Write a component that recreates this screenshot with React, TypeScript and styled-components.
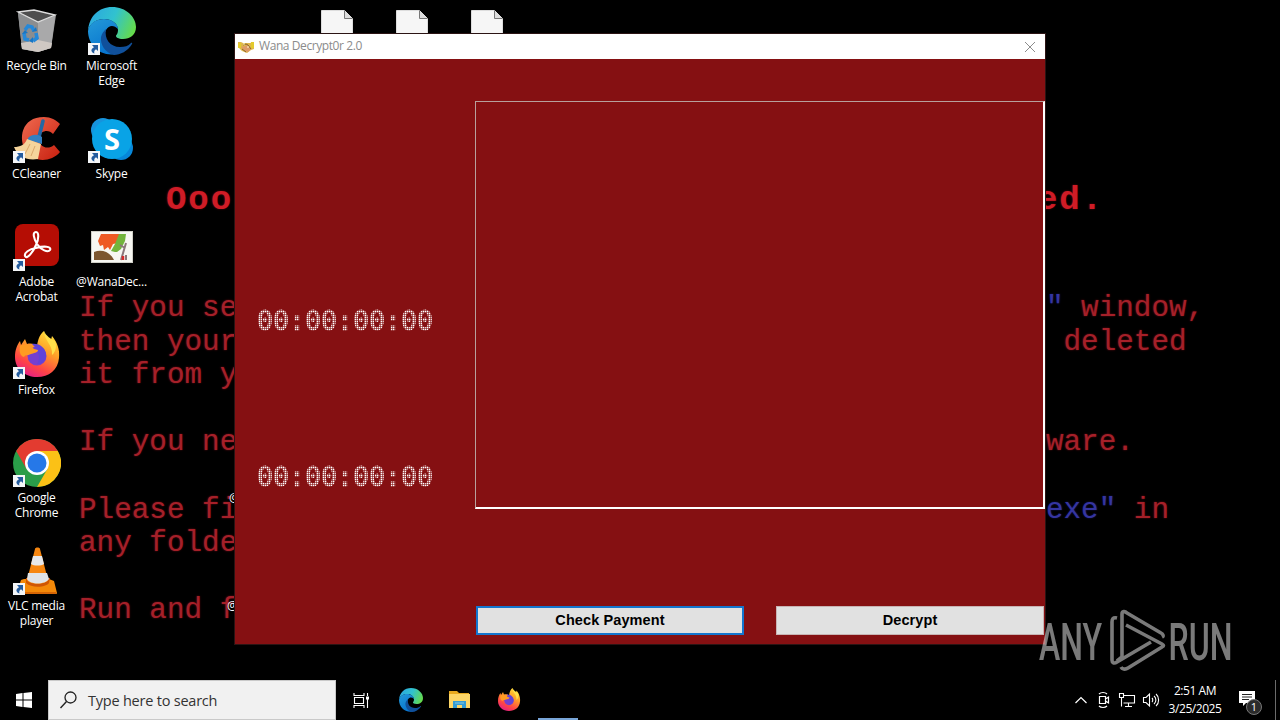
import React from "react";
import styled, { createGlobalStyle } from "styled-components";

const Global = createGlobalStyle`
  * { box-sizing: border-box; }
  html, body { margin: 0; background: #000; overflow: hidden; }
  svg { display: block; flex: none; }
`;

const Screen = styled.main`
  position: relative;
  display: flex;
  flex-direction: column;
  width: 1280px;
  height: 720px;
  overflow: hidden;
  background: #000;
  font-family: "Open Sans", "Noto Sans", sans-serif;
`;

const Desktop = styled.section`
  position: relative;
  height: 680px;
`;

const Wallpaper = styled.div`
  position: absolute;
  inset: 0;
  padding: 179px 0 0 79px;
  font-family: "Liberation Mono", monospace;
  color: #a52029;
`;

const Headline = styled.div`
  display: flex;
  justify-content: space-between;
  width: 938px;
  margin: 0 0 71px 87px;
  font-size: 34px;
  letter-spacing: 1.950px;
  line-height: 42px;
  font-weight: 700;
  color: #cf1c26;
  text-shadow: 0 0 2px #6b0a10;
`;

const Line = styled.div<{ $chars?: number }>`
  display: flex;
  justify-content: space-between;
  width: ${(p) => (p.$chars ? p.$chars + "ch" : "auto")};
  height: 33.6px;
  font-size: 29.3px;
  line-height: 33.6px;
  white-space: pre;
  text-shadow: 0 0 2px #700c14;
`;

const Blue = styled.span`
  color: #3535a0;
  text-shadow: 0 0 2px #15155e;
`;

const IconGrid = styled.div`
  position: relative;
  display: grid;
  grid-template-columns: repeat(7, 75px);
  grid-template-rows: repeat(6, 108px);
  height: 648px;
  margin-left: -1px;
`;

const Shortcut = styled.div<{ $col: number; $row: number }>`
  grid-column: ${(p) => p.$col};
  grid-row: ${(p) => p.$row};
  display: flex;
  flex-direction: column;
  align-items: center;
  padding: 7px 0 0 0;
`;

const IconBox = styled.div`
  position: relative;
  width: 48px;
  height: 48px;
`;

const ArrowBadge = styled.div`
  position: absolute;
  left: 0;
  bottom: 0;
  width: 12px;
  height: 12px;
`;

const Label = styled.div<{ $edge?: number }>`
  width: 75px;
  margin-top: 3px;
  padding-left: ${(p) => p.$edge ?? 0}px;
  text-align: ${(p) => (p.$edge === undefined ? "center" : "left")};
  font-size: 12px;
  line-height: 15px;
  letter-spacing: -0.22px;
  color: #fff;
  white-space: pre-line;
  text-shadow: 0 1px 1px #000;
`;

const Window = styled.article`
  position: absolute;
  left: 235px;
  top: 34px;
  width: 810px;
  height: 610px;
  display: flex;
  flex-direction: column;
  background: #851012;
  box-shadow: 0 0 0 1px #2b1414;
`;

const TitleBar = styled.header`
  display: flex;
  align-items: center;
  height: 25px;
  padding: 0 9px 0 3px;
  background: #fff;
`;

const Title = styled.span`
  flex: 1;
  margin: -1px 0 0 4px;
  font-size: 12px;
  line-height: 16px;
  letter-spacing: -0.42px;
  color: #8b8b8b;
`;

const Body = styled.div`
  display: flex;
  flex: 1;
`;

const Timers = styled.div`
  width: 240px;
  padding: 246px 0 0 22px;
`;

const Countdown = styled.div`
  height: 32px;
  margin-bottom: 124px;
  font-family: "DejaVu Sans Mono", monospace;
  font-size: 26.58px;
  line-height: 32px;
  color: #fff;
  -webkit-text-stroke: 1px #fff;
  mask-image:
    linear-gradient(90deg, #000 1px, rgba(0, 0, 0, 0.42) 1px),
    linear-gradient(#000 1px, rgba(0, 0, 0, 0.42) 1px);
  mask-size: 2px 2px;
  mask-composite: intersect;
`;

const Main = styled.div`
  width: 570px;
  padding-top: 42px;
`;

const MessagePane = styled.div`
  height: 408px;
  border: 1px solid #b8a09c;
  border-right: 2px solid #fff;
  border-bottom: 2px solid #fff;
`;

const Actions = styled.div`
  display: flex;
  gap: 32px;
  padding: 97px 1px 0;
`;

const Button = styled.button<{ $focused?: boolean }>`
  width: 268px;
  height: 29px;
  padding: 0 0 1px;
  border: ${(p) => (p.$focused ? "2px solid #1376cf" : "1px solid #c8b4b4")};
  background: #e1e1e1;
  font-family: "Liberation Sans", sans-serif;
  font-size: 14.5px;
  font-weight: 700;
  letter-spacing: 0.1px;
  color: #000;
`;

const Watermark = styled.div`
  position: absolute;
  left: 1038px;
  top: 608px;
  display: flex;
  opacity: 0.48;
`;

const Taskbar = styled.footer`
  display: flex;
  height: 40px;
  background: #000;
`;

const Start = styled.div`
  display: grid;
  place-items: center;
  width: 48px;
`;

const Search = styled.div`
  display: flex;
  align-items: center;
  gap: 11px;
  width: 288px;
  padding-left: 11px;
  border: 1px solid #c9c9c9;
  background: #f1f1f1;
  font-size: 14.5px;
  letter-spacing: -0.22px;
  color: #333;
`;

const TaskButton = styled.div<{ $active?: boolean }>`
  display: grid;
  place-items: center;
  width: ${(p) => (p.$active ? 40 : 49)}px;
  margin-left: ${(p) => (p.$active ? 5 : 0)}px;
  border-bottom: ${(p) => (p.$active ? "2px solid #78a5d8" : "0")};
`;

const TaskList = styled.div`
  display: flex;
  margin-left: 1px;
`;

const Tray = styled.div`
  display: flex;
  align-items: center;
  gap: 6px;
  margin-left: auto;
`;

const Clock = styled.div`
  width: 66px;
  margin-left: -4px;
  text-align: center;
  font-size: 12px;
  line-height: 18px;
  letter-spacing: -0.45px;
  color: #fff;
`;

const Notice = styled.div`
  position: relative;
  width: 26px;
  height: 20px;
  margin-left: 4px;
`;

const Count = styled.span`
  position: absolute;
  left: 8px;
  top: 9px;
  width: 16px;
  height: 16px;
  border: 1px solid #777;
  border-radius: 50%;
  background: #2b2b2b;
  font-size: 11px;
  line-height: 14px;
  text-align: center;
  color: #fff;
`;

const PeekEdge = styled.div`
  width: 5px;
  height: 40px;
  margin-left: 5px;
  border-left: 1px solid #6b6b6b;
`;

const Arrow = () => (
  <ArrowBadge>
    <svg width="12" height="12" viewBox="0 0 12 12">
      <rect width="12" height="12" fill="#f4f6f8" />
      <path d="M4 2h6v6L8 6.2C6 7.500 6 9 6.500 10.500 2.500 9 2.500 6 6 4.200Z" fill="#245c9e" />
    </svg>
  </ArrowBadge>
);

const RecycleBin = () => (
  <svg width="48" height="48" viewBox="0 0 48 48">
    <path d="M5 5 43 8 38 41 25 45 9 42Z" fill="#9b9b9b" />
    <path d="M5 6 25 15 25 45 9 42Z" fill="#8b8d8f" />
    <path d="M25 15 42 9 38 41 25 45Z" fill="#a9a9aa" />
    <path d="m8 36 17-3v12L9 42Zm17-3 14 3-1 5-13 4Z" fill="#cfc8c3" />
    <path d="M5 5 21 3 42 8 25 15Z" fill="#4e4e4e" stroke="#dedede" strokeWidth="1.300" />
    <g fill="none" stroke="#2688d8" strokeWidth="3.600">
      <path d="m12 23 3-4 4 1 2 4M23 26l1 5-4 3M16 33l-4-1-1-6" />
    </g>
    <path d="m19 25 5-1-1-4ZM20 30v6l-4-2ZM9 27l3-4 3 3Z" fill="#1976c4" />
  </svg>
);

const Edge = ({ size = 48, id }: { size?: number; id: string }) => (
  <svg width={size} height={size} viewBox="0 0 48 48">
    <defs>
      <linearGradient id={id + "a"} x1="0" y1=".3" x2="1" y2=".6">
        <stop stopColor="#2ba8df" /><stop offset=".5" stopColor="#31c2cf" /><stop offset="1" stopColor="#65db4b" />
      </linearGradient>
      <linearGradient id={id + "b"} x1="0" y1="0" x2=".5" y2="1">
        <stop stopColor="#249ad8" /><stop offset="1" stopColor="#0875cf" />
      </linearGradient>
    </defs>
    <path d="M0 24C1 9 11 0 24 0c14 0 24 10 24 20 0 8-6 12-13 12-5 0-7-2-7-3s2-2 2-6c0-7-7-11-14-11C8 12 1 17 0 24Z" fill={`url(#${id}a)`} />
    <path d="M0 24c1-7 7-12 16-12 8 0 14 5 14 10-4-4-9-4-12 1-4 8-1 19 10 24C12 50 0 38 0 24Z" fill={`url(#${id}b)`} />
    <path d="M18 22c-2 10 4 18 14 18 5 0 8-1 11-4 1-.5 1.500 0 1 1-4 7-12 11-18 11-9-2-14-11-13-18 1-4 3-6 5-8Z" fill="#10509b" />
  </svg>
);

const CCleaner = () => (
  <svg width="48" height="48" viewBox="0 0 48 48">
    <defs>
      <linearGradient id="cc" x1="0" y1="0" x2="1" y2="1">
        <stop stopColor="#ef6a50" /><stop offset="1" stopColor="#c8200f" />
      </linearGradient>
    </defs>
    <path d="M47 9 40 19C36 14 28 15 26 22c-1 9 8 14 15 8l6 7C38 48 20 47 13 37 5 24 8 2 31 2c7 0 12 3 16 7Z" fill="url(#cc)" />
    <path d="m30 6-4 16" stroke="#2468a5" strokeWidth="3.600" strokeLinecap="round" />
    <path d="M15 23c4-4 10-4 14-1v7l-14-4Z" fill="#347fc1" />
    <path d="M14 24 28 29 25 44C15 46 5 42 1 32c6 0 11-2 13-8Z" fill="#f5d49b" />
    <path d="m17 29-5 10m10-8-4 10" stroke="#dba86c" />
  </svg>
);

const Skype = () => (
  <svg width="48" height="48" viewBox="0 0 48 48">
    <circle cx="15" cy="15" r="12" fill="#1793dc" />
    <circle cx="33" cy="33" r="12" fill="#0787d9" />
    <circle cx="24" cy="24" r="20" fill="#09a3e6" />
    <text x="24" y="34.500" textAnchor="middle" fill="#fff" fontFamily="Open Sans" fontWeight="700" fontSize="29">S</text>
  </svg>
);

const Acrobat = () => (
  <svg width="48" height="48" viewBox="0 0 48 48">
    <rect x="2" y="1" width="44" height="42" rx="8" fill="#b50d04" />
    <path d="M23 9c-4 0-2 7 1 12 4 6 11 9 13 6 2-4-7-4-14-2-7 1-12 5-11 8 2 4 8-4 11-11 3-6 3-13 0-13Z" fill="none" stroke="#fff" strokeWidth="2.100" />
  </svg>
);

const Picture = () => (
  <svg width="48" height="48" viewBox="0 0 48 48">
    <rect x="3.500" y="8.500" width="41" height="31" fill="#f7f7f2" stroke="#d0d0c8" />
    <path d="m13 11 20 0-3 9-5 1-3 6-2-3-4 3-1-5-3 1-2-5Z" fill="#ee5a24" />
    <path d="m31 11 7 0-1 7-4 8-4 3-2 0-4-1 4-7Z" fill="#72b43b" />
    <path d="M6 29c8-3 16 0 20 8H6Z" fill="#7c562f" />
    <path d="m38 20-5 17m4-12-5-3m6 10 0 5" stroke="#8b7779" strokeWidth="2" />
    <path d="M35 33v4" stroke="#d62a2a" strokeWidth="2.500" />
  </svg>
);

const Firefox = ({ size = 48, id }: { size?: number; id: string }) => (
  <svg width={size} height={size} viewBox="0 0 48 48">
    <defs>
      <linearGradient id={id} x1=".8" y1="0" x2=".3" y2="1">
        <stop stopColor="#ffe43b" /><stop offset=".4" stopColor="#ff9d28" /><stop offset=".75" stopColor="#ff4545" /><stop offset="1" stopColor="#e51e87" />
      </linearGradient>
    </defs>
    <path d="M31 0c1 5 4 8 7 9l1-4c5 6 8 13 7 22-1 12-10 19-22 19S2 38 2 26c0-7 2-12 5-16l1 4 4-6 2 5c4-1 8 0 10 2 1-7 3-12 7-15Z" fill={`url(#${id})`} />
    <circle cx="24" cy="25" r="9.500" fill="#743fd0" />
    <path d="M19 13c7-1 14 4 14 11 0 6-4 9-9 9 4-6 2-13-5-20Z" fill="#6043d8" />
    <path d="M7 15c5-3 11-1 14 3l4 1c0 3-5 3-7 4-4 2-5 0-7 3-4-1-5-6-4-11Z" fill="#ff9b21" />
    <path d="M31 0c0 10 9 13 8 24 4-3 5-10 3-14-4-2-9-5-11-10Z" fill="#ffe04a" />
  </svg>
);

const Chrome = () => (
  <svg width="48" height="48" viewBox="0 0 48 48">
    <circle cx="24" cy="24" r="24" fill="#2a9d49" />
    <path d="M3.200 12A24 24 0 0 1 44.800 12L24 24 13.600 30Z" fill="#e33b30" />
    <path d="M24 12H44.800A24 24 0 0 1 24 48L34.400 30Z" fill="#fbc116" />
    <circle cx="24" cy="24" r="12" fill="#fff" />
    <circle cx="24" cy="24" r="9.500" fill="#2678e8" />
  </svg>
);

const Vlc = () => (
  <svg width="48" height="48" viewBox="0 0 48 48">
    <path d="m11 32 25 0 5 2 3 12c0 1-1 1-2 1H5c-1 0-1-1-1-2l4-12Z" fill="#f48909" />
    <path d="M13 36c5 5 19 5 23 0l1-5H13Z" fill="#cf5605" />
    <path d="M22 2c0-2 5-2 5 0l8 31c-2 5-19 5-21 0Z" fill="#f68610" />
    <path d="m20 9 9 0 2 8c-3 2-10 2-13 0Z" fill="#e6e8eb" />
    <path d="m15 26 19 0 2 6c-4 6-19 6-22 0Z" fill="#e0e3e7" />
    <path d="M5 46h38" stroke="#cd5a05" strokeWidth="1.500" />
  </svg>
);

const Page = () => (
  <svg width="48" height="48" viewBox="0 0 48 48">
    <path d="M8.500 3.500h23l8 8V48h-31Z" fill="#f6f6f6" stroke="#ddd" />
    <path d="M31.500 3.500v8h8" fill="#ddd" stroke="#777" />
  </svg>
);

const Handshake = () => (
  <svg width="17" height="14" viewBox="0 0 17 14">
    <path d="M0 2h3l2 1 3 0 4 0 4-1v7l-3 1-4 3-5-2-3-3H0Z" fill="#dfb64c" />
    <path d="m3 7 4 4 3 1 3-3-3-4-3 1Z" fill="#dd9a68" />
    <path d="M0 3h3v5H0Zm13-1h3v6h-3Z" fill="#e3c92d" />
    <path d="m5 5 3-1 2 1 3 4M4 9l4 3" fill="none" stroke="#8c6428" />
    <path d="M5 4h2m2 3h2" stroke="#fff4c8" />
  </svg>
);

const Explorer = () => (
  <svg width="23" height="20" viewBox="0 0 23 20">
    <path d="M1 1h8l2 2h10v15H1Z" fill="#e8a91e" />
    <path d="M1 4h21v14H1Z" fill="#fcd566" />
    <path d="M5 18v-7h13v7h-4v-3H9v3Z" fill="#329bd4" />
    <path d="M7 13h9" stroke="#86c7df" />
  </svg>
);

const shortcuts: { col: number; row: number; label: string; icon: React.ReactNode; link?: boolean }[] = [
  { col: 1, row: 1, label: "Recycle Bin", icon: <RecycleBin /> },
  { col: 2, row: 1, label: "Microsoft\nEdge", icon: <Edge id="edge" />, link: true },
  { col: 1, row: 2, label: "CCleaner", icon: <CCleaner />, link: true },
  { col: 2, row: 2, label: "Skype", icon: <Skype />, link: true },
  { col: 1, row: 3, label: "Adobe\nAcrobat", icon: <Acrobat />, link: true },
  { col: 2, row: 3, label: "@WanaDec...", icon: <Picture /> },
  { col: 1, row: 4, label: "Firefox", icon: <Firefox id="fox" />, link: true },
  { col: 1, row: 5, label: "Google\nChrome", icon: <Chrome />, link: true },
  { col: 1, row: 6, label: "VLC media\nplayer", icon: <Vlc />, link: true },
];

export default function App() {
  return (
    <Screen>
      <Global />
      <Desktop>
        <Wallpaper>
          <Headline><span>Ooop</span><span>ed.</span></Headline>
          <Line $chars={64}><span>If you se</span><span><Blue>"</Blue> window,</span></Line>
          <Line $chars={63}><span>then your</span><span>deleted</span></Line>
          <Line>it from y</Line>
          <Line />
          <Line $chars={60}><span>If you ne</span><span>ware.</span></Line>
          <Line />
          <Line $chars={62}><span>Please fi</span><span><Blue>exe"</Blue> in</span></Line>
          <Line>any folde</Line>
          <Line />
          <Line>Run and f</Line>
        </Wallpaper>
        <IconGrid>
          {shortcuts.map((s) => (
            <Shortcut key={s.label} $col={s.col} $row={s.row}>
              <IconBox>{s.icon}{s.link && <Arrow />}</IconBox>
              <Label>{s.label}</Label>
            </Shortcut>
          ))}
          {[5, 6, 7].map((col) => (
            <Shortcut key={col} $col={col} $row={1}><IconBox><Page /></IconBox></Shortcut>
          ))}
          {[5, 6].map((row) => (
            <Shortcut key={row} $col={4} $row={row}>
              <IconBox />
              <Label $edge={row === 5 ? 5 : 3}>@</Label>
            </Shortcut>
          ))}
        </IconGrid>
        <Window>
          <TitleBar>
            <Handshake />
            <Title>Wana Decrypt0r 2.0</Title>
            <svg width="12" height="12" viewBox="0 0 12 12"><path d="m1 1 10 10M11 1 1 11" stroke="#8c8c8c" /></svg>
          </TitleBar>
          <Body>
            <Timers>
              <Countdown>00:00:00:00</Countdown>
              <Countdown>00:00:00:00</Countdown>
            </Timers>
            <Main>
              <MessagePane />
              <Actions>
                <Button $focused>Check Payment</Button>
                <Button>Decrypt</Button>
              </Actions>
            </Main>
          </Body>
        </Window>
      </Desktop>
      <Taskbar>
        <Start>
          <svg width="16" height="16" viewBox="0 0 16 16"><path d="M0 2 6.500 1v6.500H0Zm7.500-1L16 0v7.500H7.500ZM0 8.500h6.500V15L0 14Zm7.500 0H16V16l-8.500-1Z" fill="#fff" /></svg>
        </Start>
        <Search>
          <svg width="17" height="18" viewBox="0 0 17 18"><circle cx="10.500" cy="6.500" r="5.500" fill="none" stroke="#222" strokeWidth="1.300" /><path d="m6.500 10.500-6 6.500" stroke="#222" strokeWidth="1.400" /></svg>
          Type here to search
        </Search>
        <TaskList>
          <TaskButton>
            <svg width="17" height="17" viewBox="0 0 17 17"><path d="M1 1v2.500h10V1M1 16v-2.500h10V16M1.500 5.500h9v6h-9ZM14.500 1v3m0 3v9" fill="none" stroke="#fff" strokeWidth="1.100" /><path d="M13 4.500h3v3h-3Z" fill="#fff" /></svg>
          </TaskButton>
          <TaskButton><Edge id="edgeTask" size={24} /></TaskButton>
          <TaskButton><Explorer /></TaskButton>
          <TaskButton><Firefox id="foxTask" size={24} /></TaskButton>
          <TaskButton $active />
        </TaskList>
        <Tray>
          <svg width="14" height="8" viewBox="0 0 14 8"><path d="m1.500 7 5.500-5.500L12.500 7" fill="none" stroke="#fff" strokeWidth="1.200" /></svg>
          <svg width="18" height="18" viewBox="0 0 18 18"><path d="M5.500 5.500h6v7h-6ZM11.500 8l3-2v6l-3-2M5 3c2-2 6-2 8 0M5 15c2 2 6 2 8 0" fill="none" stroke="#fff" strokeWidth="1.200" /></svg>
          <svg width="18" height="16" viewBox="0 0 18 16"><path d="M5 3.500h11.500v7.500H5.500M10.500 11v3M7 14.500h7M1.500 1.500h4v4h-4ZM3.500 5.500v9" fill="none" stroke="#fff" strokeWidth="1.100" /></svg>
          <svg width="18" height="16" viewBox="0 0 18 16"><path d="M1.500 5.500H4l3.500-3.500v12L4 10.500H1.500ZM10 6c1 1 1 3 0 4m2-6c2.500 2 2.500 6 0 8m2-10c3.500 3 3.500 9 0 12" fill="none" stroke="#fff" strokeWidth="1.100" /></svg>
          <Clock>2:51 AM<br />3/25/2025</Clock>
          <Notice>
            <svg width="18" height="18" viewBox="0 0 18 18"><path d="M1 1h16v12H8l-3 3v-3H1Z" fill="#fff" /><path d="M4 4.500h10M4 7h10M4 9.500h7" stroke="#222" /></svg>
            <Count>1</Count>
          </Notice>
          <PeekEdge />
        </Tray>
      </Taskbar>
      <Watermark>
        <svg width="200" height="66" viewBox="0 0 200 66">
          <g fill="#fff" fontFamily="Roboto" fontWeight="500" fontSize="52.500">
            <text x="1" y="52" textLength="63" lengthAdjust="spacingAndGlyphs">ANY</text>
            <text x="130.500" y="52" textLength="64" lengthAdjust="spacingAndGlyphs">RUN</text>
          </g>
          <g fill="none" stroke="#fff" strokeWidth="3.600" strokeLinejoin="round">
            <path d="M79 10c-4-1-5 1-5 4v38c0 3 2 4 5 2l34-20" />
            <path d="M79 53 84 49V6c0-3 3-3 5-1l34 20c2 1 3 3 1 4" />
            <path d="m88 17 36 19c2 1 2 2 0 3L90 60c-3 2-6 1-7-1" />
          </g>
        </svg>
      </Watermark>
    </Screen>
  );
}
